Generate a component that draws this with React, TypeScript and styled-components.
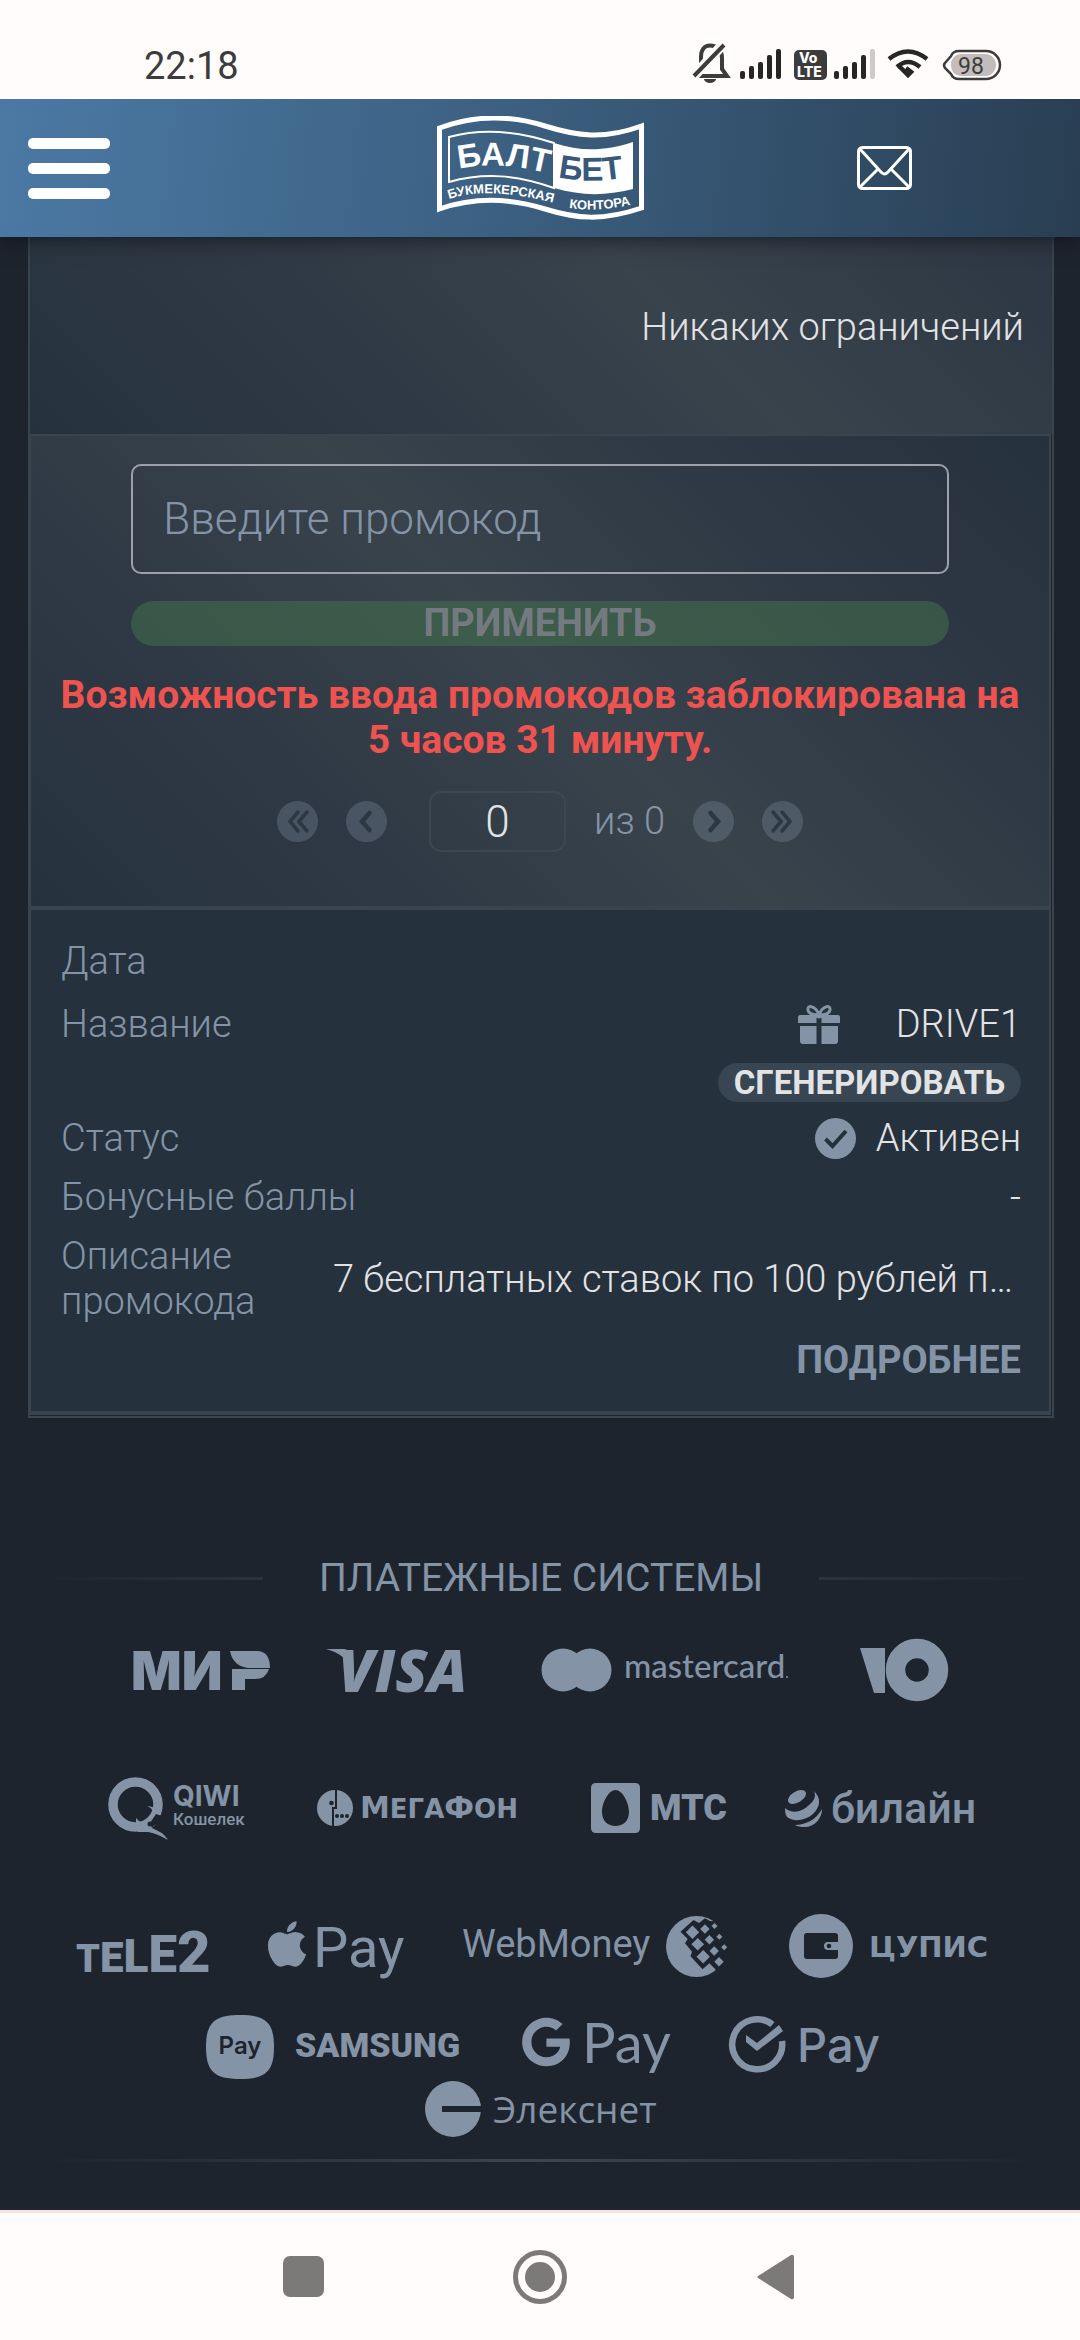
import React, { useState } from 'react';
import styled, { createGlobalStyle } from 'styled-components';
import { FaApple, FaGoogle } from 'react-icons/fa';

const c = {
  page: '#1e242e',
  panel: '#25313c',
  line: '#39444e',
  muted: '#8494a6',
  text: '#e2e3e5',
  red: '#ee5350',
  system: '#fffcfb',
  icon: '#3c3c3c',
};

const sheen = '#25323d 0%, #2f3945 26%, #39434c 50%, #2f3945 74%, #25313d 100%';

const GlobalStyle = createGlobalStyle`
  * { box-sizing: border-box; }
  body { margin: 0; background: ${c.page}; font-family: Roboto, "Noto Sans", sans-serif; }
  button, input { font-family: inherit; }
  button { padding: 0; border: 0; background: none; cursor: pointer; }
`;

const Screen = styled.div`
  display: flex;
  flex-direction: column;
  min-height: 100vh;
  color: ${c.text};
  font-size: 38px;
  font-weight: 300;
  line-height: 45px;
`;

/* ---------- status bar ---------- */

const StatusBar = styled.div`
  position: relative;
  z-index: 1;
  display: flex;
  align-items: flex-end;
  justify-content: space-between;
  height: 99px;
  padding: 0 76px 10px 144px;
  background: ${c.system};
  color: ${c.icon};
`;

const Clock = styled.time`
  font-size: 38px;
  font-weight: 400;
`;

const StatusIcons = styled.svg`
  width: 312px;
  height: 48px;
`;

/* ---------- header ---------- */

const Header = styled.header`
  position: relative;
  display: grid;
  grid-template-columns: 1fr auto 1fr;
  align-items: center;
  height: 138px;
  padding: 0 28px;
  background: linear-gradient(96deg, #4b79a4 0%, #3b5f80 48%, #293e52 100%);
  box-shadow: 0 2px 18px rgba(10, 14, 20, 0.7);
`;

const MenuButton = styled.button`
  display: flex;
  flex-direction: column;
  gap: 14px;
  width: 82px;
`;

const MenuBar = styled.span`
  height: 11px;
  border-radius: 5px;
  background: #fff;
`;

const BrandLink = styled.a`
  display: block;
  height: 104px;
`;

const MailButton = styled.button`
  justify-self: end;
  height: 44px;
  margin-right: 140px;
`;

/* ---------- promo panel ---------- */

const Main = styled.main`
  flex: 1;
  padding: 0 26px 46px 28px;
`;

const Panel = styled.section`
  border: 2px solid ${c.line};
  border-top: 0;
`;

const LimitRow = styled.p`
  display: flex;
  justify-content: flex-end;
  min-height: 197px;
  margin: 0;
  padding: 68px 28px 0;
  background: linear-gradient(45deg, ${sheen}) bottom / 100% 512px;
`;

const Inner = styled.div`
  margin-bottom: 1px;
  margin-right: 1px;
  border: 2px solid ${c.line};
  border-left-width: 1px;
  border-bottom-width: 4px;
`;

const PromoForm = styled.form`
  display: flex;
  flex-direction: column;
  align-items: center;
  padding: 28px 28px 54px;
  border-bottom: 4px solid ${c.line};
  background: linear-gradient(45deg, ${sheen});
`;

const CodeInput = styled.input`
  width: 85%;
  height: 110px;
  padding: 0 30px;
  border: 2px solid #9da2aa;
  border-radius: 10px;
  outline: none;
  background: transparent;
  color: ${c.text};
  font-size: 44px;
  font-weight: 300;
  &::placeholder { color: ${c.muted}; opacity: 1; }
`;

const ApplyButton = styled.button`
  width: 85%;
  height: 45px;
  margin-top: 27px;
  border-radius: 23px;
  background: rgba(68, 118, 76, 0.5);
  color: #747a80;
  font-size: 38px;
  font-weight: 700;
  line-height: 45px;
`;

const ErrorText = styled.p`
  margin: 27px 0 0;
  color: ${c.red};
  font-size: 39px;
  font-weight: 700;
  text-align: center;
`;

const Pager = styled.nav`
  display: flex;
  align-items: center;
  gap: 28px;
  margin-top: 28px;
  color: ${c.muted};
`;

const PagerButton = styled.button`
  display: grid;
  place-items: center;
  width: 41px;
  height: 41px;
  border-radius: 50%;
  background: rgba(132, 148, 166, 0.3);
`;

const PageInput = styled.input`
  width: 137px;
  height: 61px;
  margin-left: 14px;
  padding: 0;
  border: 2px solid #3d474f;
  border-radius: 12px;
  outline: none;
  background: transparent;
  color: ${c.text};
  font-size: 44px;
  font-weight: 300;
  text-align: center;
`;

const Details = styled.div`
  padding: 29px 28px 28px 30px;
  background: ${c.panel};
`;

const DetailList = styled.dl`
  display: flex;
  flex-direction: column;
  gap: 14px;
  margin: 0;
`;

const DetailRow = styled.div`
  display: flex;
  justify-content: space-between;
`;

const NameRow = styled(DetailRow)`
  padding-top: 4px;
`;

const Term = styled.dt<{ $narrow?: boolean }>`
  flex: none;
  width: ${(p) => (p.$narrow ? '210px' : 'auto')};
  color: ${c.muted};
`;

const Value = styled.dd`
  display: flex;
  align-items: center;
  gap: 20px;
  margin: 0;
`;

const NameValue = styled.dd`
  display: flex;
  flex-direction: column;
  align-items: flex-end;
  gap: 16px;
  margin: 0;
`;

const NameLine = styled.span`
  display: flex;
  align-items: center;
  gap: 56px;
`;

const Description = styled.dd`
  flex: 1;
  align-self: center;
  margin: 0 8px 0 45px;
  overflow: hidden;
  text-align: right;
  text-overflow: ellipsis;
  white-space: nowrap;
`;

const GenerateButton = styled.button`
  height: 39px;
  padding: 0 16px;
  border-radius: 20px;
  background: #384552;
  color: ${c.text};
  font-size: 33px;
  font-weight: 700;
  line-height: 38px;
`;

const MoreButton = styled.button`
  display: block;
  margin: 14px 0 0 auto;
  color: ${c.muted};
  font-size: 38px;
  font-weight: 700;
  line-height: 45px;
`;

/* ---------- payment systems ---------- */

const Payments = styled.section`
  margin-top: 138px;
  padding: 0 11px;
`;

const PaymentsTitle = styled.h2`
  display: grid;
  grid-template-columns: 1fr auto 1fr;
  align-items: center;
  gap: 56px;
  margin: 0;
  color: ${c.muted};
  font-size: 39px;
  font-weight: 400;
`;

const Fade = styled.span<{ $to: 'left' | 'right' }>`
  height: 3px;
  background: linear-gradient(to ${(p) => p.$to}, #2c333f, transparent);
`;

const LogoRow = styled.div<{ $top: number }>`
  display: flex;
  justify-content: center;
  gap: 56px;
  margin-top: ${(p) => p.$top}px;
  svg { display: block; flex: none; overflow: visible; }
`;

const Divider = styled.hr`
  height: 3px;
  margin: 20px 0 0;
  border: 0;
  background: linear-gradient(to right, transparent, #3d444f, transparent);
`;

/* ---------- system navigation ---------- */

const SystemNav = styled.nav`
  display: flex;
  align-items: center;
  justify-content: space-between;
  height: 130px;
  padding: 0 283px;
  border-top: 3px solid #fbe1dd;
  background: ${c.system};
`;

const NavButton = styled.button`
  display: grid;
  place-items: center;
  height: 56px;
`;

/* ---------- drawings ---------- */

function StatusDrawing() {
  const bars = [8, 13, 17, 24, 30];
  return (
    <StatusIcons viewBox="0 0 312 48" fill={c.icon} aria-hidden="true">
      <g>
        <path d="M5 35 H34 L29 28 V17 C29 9 24 4.500 17 4.500 C11 4.500 8 9 8 16 V27 Z" transform="translate(1 0)" fill="none" stroke={c.icon} strokeWidth="4" />
        <path d="M12 38 h12 a6 4 0 0 1 -12 0z" />
        <path d="M34 0 L1 36" stroke={c.system} strokeWidth="10" />
        <path d="M32 4 L2 35" stroke={c.icon} strokeWidth="4" />
      </g>
      {bars.map((h, i) => (
        <rect key={i} x={48 + i * 9} y={38 - h} width="5" height={h} rx="2" fill="#262626" />
      ))}
      <rect x="102" y="9" width="33" height="30" rx="5" />
      <g fill={c.system} fontFamily="Inter, sans-serif" fontWeight="800">
        <text x="107" y="22" fontSize="14">Vo</text>
        <text x="105" y="36" fontSize="14">LTE</text>
      </g>
      {bars.map((h, i) => (
        <rect key={i} x={142 + i * 9} y={38 - h} width="5" height={h} rx="2" fill={i === 4 ? '#cfcaca' : '#262626'} />
      ))}
      <g fill="none" stroke="#262626" strokeWidth="4.500">
        <path d="M197 18 Q216 3 235 18" />
        <path d="M205 26 Q216 16 228 26" />
        <path d="M207 25 L216 34 L219 31 L214 27" />
      </g>
      <path d="M267 10 H294 a14 14 0 0 1 0 28 H267 q-6 0 -8 -5 l-6 -6 q-2 -3 0 -5 l6 -7 q2 -5 8 -5z" fill="none" stroke={c.icon} strokeWidth="2.500" />
      <path d="M269 13 H293 a11 11 0 0 1 0 22 H269 q-10 -1 -10 -11 q0 -10 10 -11z" fill="#c2bcbc" />
      <text x="279" y="33" fontSize="23" textAnchor="middle" fontFamily="Roboto, sans-serif" fontWeight="400">98</text>
    </StatusIcons>
  );
}

function BaltBetLogo() {
  return (
    <svg width="207" height="104" viewBox="0 0 207 104" role="img" aria-label="БалтБет">
      <defs>
        <path id="wave-left" d="M22 53 Q62 44 114 58" />
        <path id="wave-right" d="M121 61 Q152 69 198 60" />
        <path id="wave-sub-left" d="M12 83 Q52 69 124 89" />
        <path id="wave-sub-right" d="M132 92 Q165 97 204 86" />
      </defs>
      <path d="M2.500 12 C40 -2 76 0 108 10 S166 24 204.500 10 V92 C166 105 140 103 108 93 S40 80 2.500 93 Z" fill="none" stroke="#fff" strokeWidth="5" />
      <path d="M12 21 C45 12 78 14 117 27 V72 C80 59 48 56 12 66 Z" fill="none" stroke="#fff" strokeWidth="2" />
      <path d="M117 27 C145 36 168 35 196 26 V73 C168 80 145 80 117 72 Z" fill="#fff" />
      <g fill="#fff" fontFamily='"Liberation Sans", Arial, sans-serif' fontWeight="700">
        <text fontSize="33"><textPath href="#wave-left">БАЛТ</textPath></text>
        <text fontSize="33" fill="#39597a"><textPath href="#wave-right">БЕТ</textPath></text>
        <text fontSize="13"><textPath href="#wave-sub-left">БУКМЕКЕРСКАЯ</textPath></text>
        <text fontSize="13"><textPath href="#wave-sub-right">КОНТОРА</textPath></text>
      </g>
    </svg>
  );
}

function MailIcon() {
  return (
    <svg width="55" height="44" viewBox="0 0 55 44" fill="none" stroke="#fff" strokeWidth="3" aria-hidden="true">
      <rect x="1.500" y="1.500" width="52" height="41" rx="4" />
      <path d="M3 3 L24 26 Q27.500 30 31 26 L52 3 M3 41 L21 23 M52 41 L34 23" />
    </svg>
  );
}

function Chevron({ back, double }: { back?: boolean; double?: boolean }) {
  return (
    <svg width="41" height="41" viewBox="0 0 41 41" fill="none" stroke="#2d3843" strokeWidth={double ? 3.5 : 4.5} strokeLinecap="round" aria-hidden="true">
      <g transform={back ? 'rotate(180 20.500 20.500)' : undefined}>
        {double ? <path d="M11 11 L19 20.500 L11 30 M20 11 L28 20.500 L20 30" /> : <path d="M17.500 12 L25 20.500 L17.500 29" />}
      </g>
    </svg>
  );
}

function GiftIcon() {
  return (
    <svg width="42" height="40" viewBox="0 0 42 40" fill={c.muted} aria-hidden="true">
      <path d="M21 10 C18 1 9 -1 10 5 C10.500 9 14 10 21 10 C28 10 31.500 9 32 5 C33 -1 24 1 21 10Z" fill="none" stroke={c.muted} strokeWidth="3" />
      <path d="M2 10 H18.500 V18 H0 V12 Q0 10 2 10Z M23.500 10 H40 Q42 10 42 12 V18 H23.500Z M18.500 10 h5 v3 h-5z" />
      <path d="M2 21 H18.500 V39 H5 Q2 39 2 36Z M23.500 21 H40 V36 Q40 39 37 39 H23.500Z" />
    </svg>
  );
}

function CheckIcon() {
  return (
    <svg width="41" height="41" viewBox="0 0 41 41" aria-hidden="true">
      <circle cx="20.500" cy="20.500" r="20.500" fill={c.muted} />
      <path d="M10.500 21 L17.500 28 L31 13" fill="none" stroke={c.panel} strokeWidth="4" />
    </svg>
  );
}

type MarkProps = { name: string; width: number; height?: number; children: React.ReactNode };

function Mark({ name, width, height = 64, children }: MarkProps) {
  return (
    <svg width={width} height={height} viewBox={`0 0 ${width} ${height}`} fill={c.muted} role="img" aria-label={name}>
      {children}
    </svg>
  );
}

const Mir = () => (
  <Mark name="МИР" width={136}>
    <text x="-3" y="52" fontFamily="Inter, sans-serif" fontWeight="900" fontSize="53">МИР</text>
    <path d="M89 12 H138 V53 H89Z" fill={c.page} />
    <path d="M96 13 H124 Q136 14 136 30 H114 Q99 28 96 13Z" />
    <path d="M98 31 H135 Q132 41 121 41 H111 V52 H98Z" />
  </Mark>
);

const Visa = () => (
  <Mark name="Visa" width={138}>
    <text x="12" y="54" fontFamily='"Open Sans", sans-serif' fontWeight="800" fontStyle="italic" fontSize="59">VISA</text>
    <path d="M0 11 H18 Q23 11 24 18 L26 32 Q20 16 0 11Z" />
  </Mark>
);

const Mastercard = () => (
  <Mark name="Mastercard" width={284}>
    <circle cx="43" cy="32" r="21.500" />
    <circle cx="70" cy="32" r="21.500" />
    <text x="104" y="40" fontFamily="Lato, sans-serif" fontWeight="500" fontSize="33">mastercard</text>
    <circle cx="267" cy="39" r="1" />
  </Mark>
);

const YooMoney = () => (
  <Mark name="ЮMoney" width={88}>
    <path d="M0 10 H25 V55 H14Z" />
    <circle cx="57" cy="32" r="21.500" fill="none" stroke={c.muted} strokeWidth="19.500" />
  </Mark>
);

const Qiwi = () => (
  <Mark name="QIWI Кошелек" width={145}>
    <circle cx="27.500" cy="28.500" r="22.500" fill="none" stroke={c.muted} strokeWidth="9.500" />
    <path d="M28 42 L28 55 Q44 54 60 64 Q55 56 46 52 L52 36 Q46 30 39 30 Q45 32 45 38 L40 48 Q33 48 28 42Z" />
    <path d="M44 52 L50 46 L54 40 L48 38 L42 47Z" fill={c.page} />
    <circle cx="42" cy="48" r="2.500" fill={c.page} />
    <path d="M44 52 L52 46 L56 46 L54 57Z" fill={c.page} />
    <path d="M30 52 Q47 50 60 63 Q52 55 40 56 L30 56Z" />
    <text x="65" y="30" fontFamily="Inter, sans-serif" fontWeight="700" fontSize="28">QIWI</text>
    <text x="65" y="49" fontFamily="Roboto, sans-serif" fontWeight="500" fontSize="17">Кошелек</text>
  </Mark>
);

const Megafon = () => (
  <Mark name="МегаФон" width={217}>
    <circle cx="26" cy="32" r="18" />
    <path d="M27 13 V32 H24 V51" fill="none" stroke={c.page} strokeWidth="2" />
    <g fill={c.page}>
      <circle cx="22.500" cy="27" r="2.300" />
      <circle cx="28" cy="40" r="2" />
      <circle cx="33" cy="40" r="2" />
      <circle cx="38" cy="40" r="2" />
    </g>
    <text x="51" y="42" fontFamily='"DejaVu Sans", sans-serif' fontWeight="700" fontSize="26">
      <tspan fontSize="30">М</tspan>ЕГА<tspan fontSize="30">Ф</tspan>ОН
    </text>
  </Mark>
);

const Mts = () => (
  <Mark name="МТС" width={147}>
    <path fillRule="evenodd" d="M14 7 H53 Q58 7 58 12 V52 Q58 57 53 57 H14 Q9 57 9 52 V12 Q9 7 14 7Z M33.500 14 C27 14 20 26 20 36 C20 45 26 50 33.500 50 C41 50 47 45 47 36 C47 26 40 14 33.500 14Z" />
    <text x="68" y="44" fontFamily="Roboto, sans-serif" fontWeight="900" fontSize="36">МТС</text>
  </Mark>
);

const Beeline = () => (
  <Mark name="билайн" width={190}>
    <ellipse cx="12" cy="21" rx="10" ry="5.500" transform="rotate(-30 12 21)" />
    <path d="M29 15 C36 22 36 30 28 38 C20 45 8 46 2 41 C0 38 0 35 0 32 C8 39 18 35 24 29 C30 24 31 20 29 15Z" />
    <path d="M10 49 C20 49 31 44 37 33 C37 43 29 51 20 51 C16 51 12 50.500 10 49Z" />
    <text x="46" y="47" fontFamily="Roboto, sans-serif" fontWeight="500" fontSize="43">билайн</text>
  </Mark>
);

const Tele2 = () => (
  <Mark name="TELE2" width={134}>
    <text x="-1" y="58" fontFamily="Roboto, sans-serif" fontWeight="900">
      <tspan fontSize="38">T</tspan>
      <tspan fontSize="42">E</tspan>
      <tspan fontSize="46">L</tspan>
      <tspan fontSize="51">E</tspan>
      <tspan fontSize="58">2</tspan>
    </text>
  </Mark>
);

const ApplePay = () => (
  <Mark name="Apple Pay" width={139}>
    <FaApple x="-6" y="4" size={52} color={c.muted} />
    <text x="46" y="53" fontFamily="Roboto, sans-serif" fontWeight="400" fontSize="56">Pay</text>
  </Mark>
);

const diamonds = [
  [26.5, 16.3, 6.7], [38.9, 13, 4.7], [48.5, 10, 3], [31.7, 28.3, 6.3], [43.4, 23.7, 4.7],
  [53.4, 20.7, 3], [37.2, 40.7, 6.7], [48.2, 35, 4.7], [58.2, 31.3, 3], [53, 45.7, 4.7],
];

const WebMoney = () => (
  <Mark name="WebMoney" width={267}>
    <text x="0" y="43" fontFamily="Roboto, sans-serif" fontWeight="400" fontSize="38">WebMoney</text>
    <g transform="translate(204 2)">
      <circle cx="30.500" cy="30.500" r="30.500" />
      <path d="M39 2.300 L33 7 L27.500 4 L14.500 15.700 L21.700 23 L19 27.300 L26 35.700 L24.500 40.300 L36.500 53.300 L43.400 47.300 L50 54 L70 54 V6 L44 5Z" fill={c.page} />
      {diamonds.map(([x, y, r], i) => (
        <path key={i} d={`M${x} ${y - r} L${x + r} ${y} L${x} ${y + r} L${x - r} ${y}Z`} />
      ))}
    </g>
  </Mark>
);

const Cupis = () => (
  <Mark name="ЦУПИС" width={221}>
    <circle cx="36" cy="32" r="32" />
    <path fill={c.page} d="M22 19 H50 Q53 19 53 22 V28 H43 Q39 28 39 32 Q39 36 43 36 H53 V42 Q53 45 50 45 H22 Q19 45 19 42 V22 Q19 19 22 19Z" />
    <circle cx="44" cy="32" r="2.300" fill={c.page} />
    <text x="84" y="43" fontFamily='"DejaVu Sans", sans-serif' fontWeight="700" fontSize="29">ЦУПИС</text>
  </Mark>
);

const SamsungPay = () => (
  <Mark name="Samsung Pay" width={263}>
    <path d="M39 0 C65 0 73 8 73 32 C73 56 65 64 39 64 C13 64 5 56 5 32 C5 8 13 0 39 0Z" />
    <text x="39" y="39" textAnchor="middle" fontFamily="Inter, sans-serif" fontWeight="600" fontSize="24" fill={c.page}>Pay</text>
    <text x="94" y="42" fontFamily="Roboto, sans-serif" fontWeight="900" fontSize="34">SAMSUNG</text>
  </Mark>
);

const GooglePay = () => (
  <Mark name="Google Pay" width={152}>
    <FaGoogle x="1" y="2" size={50} color={c.muted} />
    <text x="62" y="48" fontFamily="Lato, sans-serif" fontWeight="400" fontSize="56">Pay</text>
  </Mark>
);

const MirPay = () => (
  <Mark name="Mir Pay" width={154}>
    <path d="M44.500 9.500 A25 25 0 1 0 54 26" fill="none" stroke={c.muted} strokeWidth="6.500" />
    <path d="M18 20 L29 28 L51 10 L55 16 L29 36 L18 27Z" />
    <text x="69" y="47" fontFamily="Inter, sans-serif" fontWeight="500" fontSize="47">Pay</text>
  </Mark>
);

const Elecsnet = () => (
  <Mark name="Элекснет" width={232} height={60}>
    <circle cx="28" cy="30" r="28" />
    <path d="M17 27 H57 V33 H17Z" fill={c.page} />
    <text x="68" y="44" fontFamily='"Open Sans", sans-serif' fontWeight="400" fontSize="37">Элекснет</text>
  </Mark>
);

/* ---------- page ---------- */

export default function App() {
  const [code, setCode] = useState('');
  const [page, setPage] = useState('0');

  return (
    <Screen>
      <GlobalStyle />
      <StatusBar>
        <Clock>22:18</Clock>
        <StatusDrawing />
      </StatusBar>

      <Header>
        <MenuButton type="button" aria-label="Меню">
          <MenuBar />
          <MenuBar />
          <MenuBar />
        </MenuButton>
        <BrandLink href="#">
          <BaltBetLogo />
        </BrandLink>
        <MailButton type="button" aria-label="Сообщения">
          <MailIcon />
        </MailButton>
      </Header>

      <Main>
        <Panel>
          <LimitRow>Никаких ограничений</LimitRow>
          <Inner>
            <PromoForm onSubmit={(e) => e.preventDefault()}>
              <CodeInput
                aria-label="Промокод"
                placeholder="Введите промокод"
                value={code}
                onChange={(e) => setCode(e.target.value)}
              />
              <ApplyButton type="submit" disabled>ПРИМЕНИТЬ</ApplyButton>
              <ErrorText>Возможность ввода промокодов заблокирована на 5 часов 31 минуту.</ErrorText>
              <Pager aria-label="Страницы">
                <PagerButton type="button" aria-label="Первая"><Chevron back double /></PagerButton>
                <PagerButton type="button" aria-label="Назад"><Chevron back /></PagerButton>
                <PageInput aria-label="Страница" value={page} onChange={(e) => setPage(e.target.value)} />
                <span>из 0</span>
                <PagerButton type="button" aria-label="Вперёд"><Chevron /></PagerButton>
                <PagerButton type="button" aria-label="Последняя"><Chevron double /></PagerButton>
              </Pager>
            </PromoForm>

            <Details>
              <DetailList>
                <DetailRow>
                  <Term>Дата</Term>
                </DetailRow>
                <NameRow>
                  <Term>Название</Term>
                  <NameValue>
                    <NameLine>
                      <GiftIcon />
                      DRIVE1
                    </NameLine>
                    <GenerateButton type="button">СГЕНЕРИРОВАТЬ</GenerateButton>
                  </NameValue>
                </NameRow>
                <DetailRow>
                  <Term>Статус</Term>
                  <Value>
                    <CheckIcon />
                    Активен
                  </Value>
                </DetailRow>
                <DetailRow>
                  <Term>Бонусные баллы</Term>
                  <Value>-</Value>
                </DetailRow>
                <DetailRow>
                  <Term $narrow>Описание промокода</Term>
                  <Description>7 бесплатных ставок по 100 рублей п…</Description>
                </DetailRow>
              </DetailList>
              <MoreButton type="button">ПОДРОБНЕЕ</MoreButton>
            </Details>
          </Inner>
        </Panel>

        <Payments>
          <PaymentsTitle>
            <Fade $to="left" />
            ПЛАТЕЖНЫЕ СИСТЕМЫ
            <Fade $to="right" />
          </PaymentsTitle>
          <LogoRow $top={37}>
            <Mir />
            <Visa />
            <Mastercard />
            <YooMoney />
          </LogoRow>
          <LogoRow $top={74}>
            <Qiwi />
            <Megafon />
            <Mts />
            <Beeline />
          </LogoRow>
          <LogoRow $top={74}>
            <Tele2 />
            <ApplePay />
            <WebMoney />
            <Cupis />
          </LogoRow>
          <LogoRow $top={37}>
            <SamsungPay />
            <GooglePay />
            <MirPay />
          </LogoRow>
          <LogoRow $top={0}>
            <Elecsnet />
          </LogoRow>
          <Divider />
        </Payments>
      </Main>

      <SystemNav aria-label="Системная навигация">
        <NavButton type="button" aria-label="Недавние">
          <svg width="41" height="41" viewBox="0 0 41 41"><rect width="41" height="41" rx="7" fill="#7b7a78" /></svg>
        </NavButton>
        <NavButton type="button" aria-label="Домой">
          <svg width="54" height="54" viewBox="0 0 54 54">
            <circle cx="27" cy="27" r="24.500" fill="none" stroke="#7b7a78" strokeWidth="5" />
            <circle cx="27" cy="27" r="15" fill="#7b7a78" />
          </svg>
        </NavButton>
        <NavButton type="button" aria-label="Назад">
          <svg width="41" height="46" viewBox="0 0 41 46">
            <path d="M2 22 L35 1 Q38 0 38 3 V43 Q38 46 35 45 L2 24 Q1 23 2 22Z" fill="#7b7a78" />
          </svg>
        </NavButton>
      </SystemNav>
    </Screen>
  );
}
